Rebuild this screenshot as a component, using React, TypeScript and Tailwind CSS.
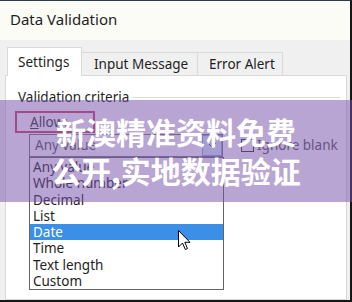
export default function App() {
  const items = ["Any value", "Whole number", "Decimal", "List", "Date", "Time", "Text length", "Custom"];
  return (
    <div className="relative w-[352px] h-[302px] overflow-hidden bg-[#f0f0f0] font-['Noto_Sans',sans-serif] text-[#1e1e1e]">
      <div className="flex flex-col h-full border-t border-t-[#2a3a55] border-r-2 border-r-[#161616] border-b-2 border-b-[#161616]">
        <div className="h-[39px] shrink-0 bg-[#fcfcf7] flex items-center pl-[10px] text-[15px] pb-[2px]">Data Validation</div>
        <div className="flex-1 flex flex-col pl-[5px] pr-[3px]">
          <div className="flex h-[35px] shrink-0 items-end pl-[2px] text-[13.5px]">
            <div className="relative z-10 -mb-px w-[75px] h-[29px] bg-white border border-b-0 border-[#d9d9d9] pl-[10px] pt-[4px]">Settings</div>
            <div className="w-[116px] h-[23px] border-t border-r border-[#d9d9d9] pl-[12px] pt-[1px]">Input Message</div>
            <div className="w-[85px] h-[23px] border-t border-r border-[#d9d9d9] pl-[11px] pt-[1px]">Error Alert</div>
          </div>
          <div className="flex-1 bg-white border border-[#d9d9d9] pl-[12px] text-[13.5px]">
            <div className="flex items-center h-[20px] mt-[11px]">
              <span>Validation criteria</span>
              <div className="flex-1 h-px bg-[#dcdcdc] ml-[4px] mr-[6px]" />
            </div>
            <div className="mt-[4px] ml-[-3px] w-[80px] h-[22px] border-2 border-[#d4426a] flex items-center pl-[13px] text-[#333]">
              <span><span className="underline">A</span>llow:</span>
            </div>
            <div className="mt-[1px] flex items-center">
              <div className="ml-[11px] w-[194px] h-[23px] border border-[#7a7a7a] flex items-center">
                <span className="pl-[5px] flex-1 text-[#555]">Any value</span>
                <div className="w-[20px] h-[21px] bg-[#dcecfc] border border-[#7eb4ea] flex items-center justify-center">
                  <svg width="8" height="5" viewBox="0 0 8 5"><path d="M0 0 L4 4 L8 0" fill="none" stroke="#444" strokeWidth="1" /></svg>
                </div>
              </div>
              <div className="ml-[18px] w-[13px] h-[13px] border border-[#333]" />
              <span className="ml-[3px] text-[#555]">Ignore blank</span>
            </div>
          </div>
        </div>
      </div>

      <div className="absolute left-[29px] top-[157px] w-[195px] h-[133px] bg-white border border-[#646464] pt-px text-[13.5px]">
        {items.map((it) => (
          <div
            key={it}
            className={
              it === "Date"
                ? "h-[16.3px] leading-[16.3px] pl-[3px] bg-[#3b8fe6] text-white"
                : "h-[16.3px] leading-[16.3px] pl-[3px] text-[#1e1e1e]"
            }
          >
            {it}
          </div>
        ))}
      </div>

      <div className="absolute left-0 top-[100px] w-full h-[102px] bg-[rgba(118,82,170,0.52)] flex flex-col items-center justify-center text-white font-bold text-[30px] leading-[39px] font-['Noto_Sans_CJK_SC',sans-serif]">
        <div>新澳精准资料免费</div>
        <div>公开,实地数据验证</div>
      </div>

      <svg className="absolute left-[178px] top-[230px]" width="13" height="21" viewBox="0 0 13 21">
        <path d="M0.5 0.5 L0.5 17 L4.5 13 L7.3 19.5 L9.5 18.6 L6.8 12.3 L12 12.3 Z" fill="white" stroke="black" strokeWidth="1" strokeLinejoin="round" />
      </svg>
    </div>
  );
}
